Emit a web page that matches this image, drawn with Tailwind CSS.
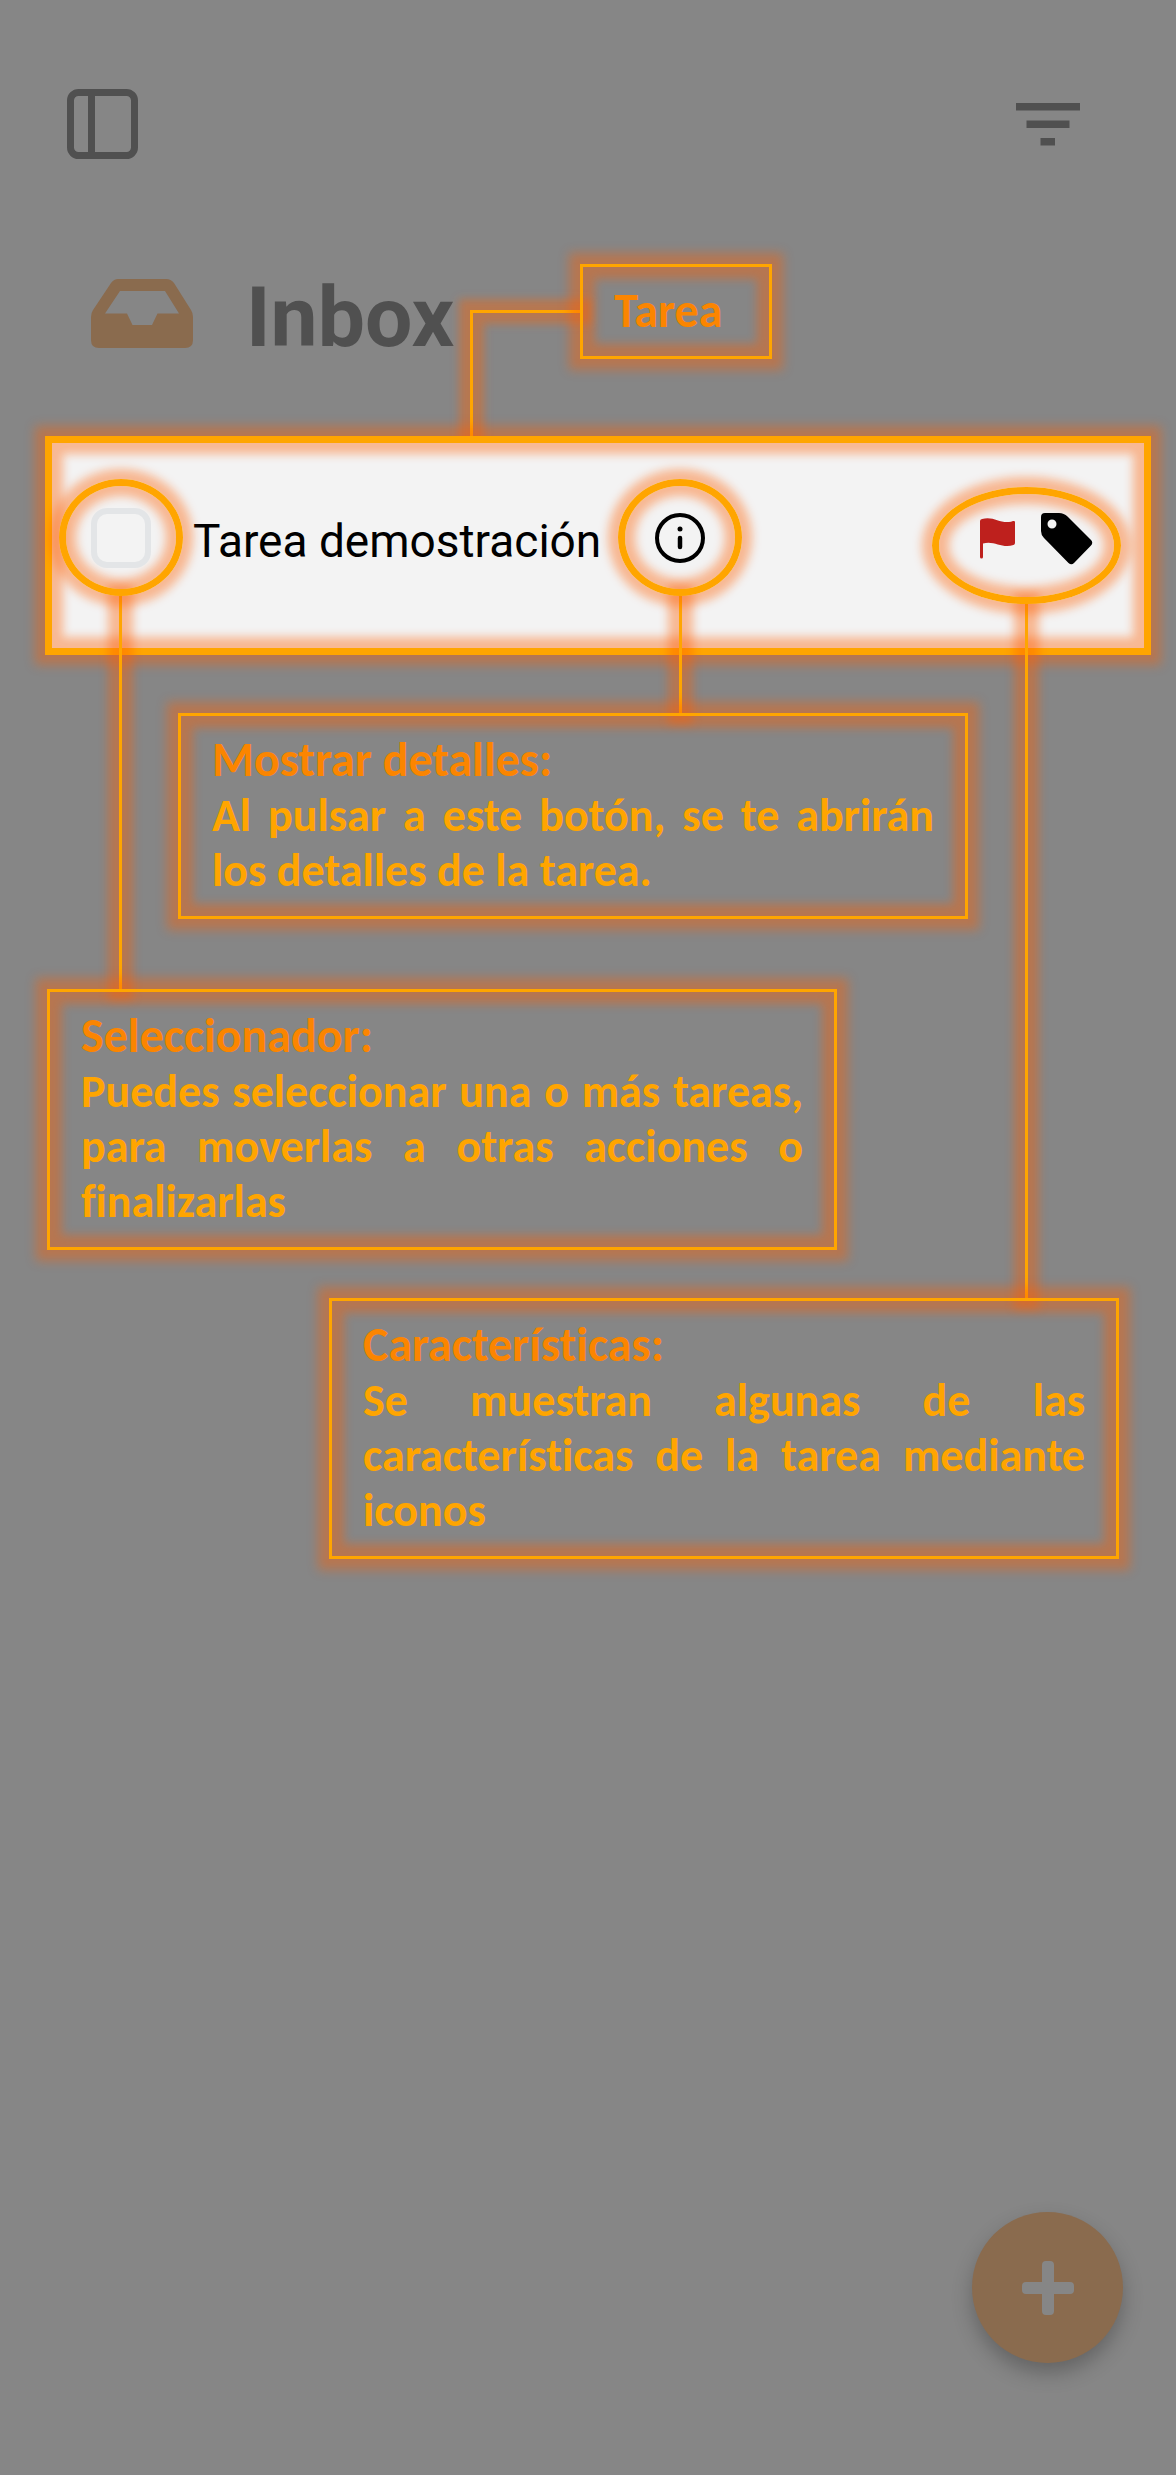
<!DOCTYPE html>
<html lang="es">
<head>
<meta charset="utf-8">
<meta name="viewport" content="width=device-width, initial-scale=1">
<title>Inbox</title>
<script src="https://cdn.jsdelivr.net/npm/@tailwindcss/browser@4"></script>
</head>
<body class="flex min-h-screen flex-col overflow-x-hidden bg-[#868686] font-[Carlito,Lato,sans-serif] [font-variant-ligatures:none]">

  <header class="flex items-center justify-between pt-[89px] pr-24 pl-[67px] text-[#505050]">
    <button type="button" aria-label="Panel lateral" class="block h-[70px] w-[71px]">
      <svg viewBox="0 0 71 70" class="size-full" fill="none" stroke="currentColor" stroke-width="7">
        <rect x="3.5" y="3.5" width="64" height="63" rx="8"/>
        <path d="M24.500 3.500V66.500"/>
      </svg>
    </button>
    <button type="button" aria-label="Filtrar" class="block h-[43px] w-16">
      <svg viewBox="0 0 64 43" class="size-full" fill="currentColor">
        <path d="M0 0H64V7.500H0ZM10.500 17.500H53.500V25H10.500ZM24.500 35H39V42.500H24.500Z"/>
      </svg>
    </button>
  </header>

  <main class="flex flex-col">
    <div class="mt-[105px] flex h-[95px] items-center pl-[91px]">
      <svg viewBox="0 0 102 69" class="mt-1 h-[69px] w-[102px] shrink-0 text-[#8a6b4e]" fill="currentColor" fill-rule="evenodd" aria-hidden="true">
        <path d="M27 0H75Q80 0 83 4L100 31Q102 34 102 38V61Q102 69 94 69H8Q0 69 0 61V38Q0 34 2 31L20 4Q23 0 27 0ZM29 12L14 34.500H36L41.500 46H61L66.500 34.500H88L74 12Z"/>
      </svg>
      <h1 class="ml-[53px] pt-3 font-[Roboto,sans-serif] text-[84px] leading-[88px] font-bold text-[#505050]">Inbox</h1>
      <div class="relative ml-[126px] shrink-0">
        <svg viewBox="0 0 110 126" class="absolute top-[46px] right-full h-[126px] w-[110px] overflow-visible" fill="none" aria-hidden="true">
          <defs>
            <filter id="glow" filterUnits="userSpaceOnUse" x="-50" y="-50" width="220" height="240"><feGaussianBlur stdDeviation="4"/></filter>
          </defs>
          <path d="M121 1.500H1.500V137" stroke="#ff6000" stroke-opacity="0.4" stroke-width="25" filter="url(#glow)"/>
          <path d="M110 1.500H1.500V126" stroke="#ffa500" stroke-width="3"/>
        </svg>
        <p class="relative w-48 border-3 border-[#ffa500] px-[31px] pt-4 pb-[18px] text-[48px] leading-[55px] font-bold text-[#fb8500] shadow-[0_0_10px_11px_#ff600066,inset_0_0_10px_12px_#ff600066]">Tarea</p>
      </div>
    </div>

    <section class="relative mt-[77px] mr-[25px] ml-[45px] flex h-[219px] items-start border-7 border-[#ffa500] bg-[#f3f3f3] pt-9 pr-[23px] pl-[7px] shadow-[0_0_10px_10px_#ff600066,inset_0_0_10px_11px_#ff600066]">
      <div class="relative h-[117px] w-31 shrink-0">
        <span class="absolute top-full left-[60px] h-[393px] w-[3px] bg-[#ffa500] shadow-[0_0_10px_11px_#ff600066]"></span>
        <span class="absolute inset-0 rounded-[50%] border-7 border-[#ffa500] shadow-[0_0_10px_10px_#ff600066,inset_0_0_10px_10px_#ff600066]"></span>
        <div class="relative flex size-full items-center justify-center">
          <input id="tarea" type="checkbox" class="size-[60px] appearance-none rounded-2xl border-6 border-[#e3e5e7] bg-[#f3f3f3]">
        </div>
      </div>
      <label for="tarea" class="ml-[10px] pt-8 font-[Roboto,sans-serif] text-[46px] leading-[60px] whitespace-nowrap text-black">Tarea demostración</label>
      <div class="relative ml-[17px] h-[117px] w-31 shrink-0">
        <span class="absolute top-full left-[61px] h-[117px] w-[3px] bg-[#ffa500] shadow-[0_0_10px_11px_#ff600066]"></span>
        <span class="absolute inset-0 rounded-[50%] border-7 border-[#ffa500] shadow-[0_0_10px_10px_#ff600066,inset_0_0_10px_10px_#ff600066]"></span>
        <button type="button" aria-label="Mostrar detalles" class="relative flex size-full items-center justify-center text-black">
          <svg viewBox="0 0 50 50" class="size-[50px]" fill="none" stroke="currentColor">
            <circle cx="25" cy="25" r="23" stroke-width="4"/>
            <path d="M25 25V34" stroke-width="4.500" stroke-linecap="round"/>
            <circle cx="25" cy="16" r="2.500" fill="currentColor" stroke="none"/>
          </svg>
        </button>
      </div>
      <div class="relative mt-2 ml-auto h-[117px] w-[189px] shrink-0">
        <span class="absolute top-full left-[93px] h-[694px] w-[3px] bg-[#ffa500] shadow-[0_0_10px_11px_#ff600066]"></span>
        <span class="absolute inset-0 rounded-[50%] border-7 border-[#ffa500] shadow-[0_0_10px_10px_#ff600066,inset_0_0_10px_10px_#ff600066]"></span>
        <div class="relative flex size-full items-start gap-[26px] pt-[26px] pl-12">
          <svg viewBox="0 0 35 41" class="mt-[5px] h-[41px] w-[35px]" fill="#be201d" role="img" aria-label="Prioridad">
            <path d="M0 3Q0 1.500 2 1C13 -2 19 5 29 4Q31 4 33 3Q35 2.500 35 4V25Q35 26.500 33.500 27C22 31 14 22 3 25.500V39Q3 40.500 1.500 40.500Q0 40.500 0 39Z"/>
          </svg>
          <svg viewBox="0 0 52 52" class="size-[52px]" fill="#000" fill-rule="evenodd" role="img" aria-label="Etiqueta">
            <path d="M4 0H18Q23 0 26.500 3.500L50 27Q52.500 29.500 50 32.500L33 50Q30.500 52.500 27.500 50L3 25Q0 22 0 18V4Q0 0 4 0ZM11 6.500A4.500 4.500 0 1 0 11 15.500A4.500 4.500 0 1 0 11 6.500Z"/>
          </svg>
        </div>
      </div>
    </section>

    <section class="relative mt-[58px] ml-[178px] max-w-[790px] border-3 border-[#ffa500] px-[31px] pt-[15px] pb-[18px] text-[46px] leading-[55px] font-bold text-[#ffa500] shadow-[0_0_10px_11px_#ff600066,inset_0_0_10px_12px_#ff600066]">
      <h2 class="text-[48px] leading-[57px] text-[#fb8500]">Mostrar detalles:</h2>
      <p class="text-justify">Al pulsar a este botón, se te abrirán los detalles de la tarea.</p>
    </section>

    <section class="relative mt-[70px] ml-[47px] max-w-[790px] border-3 border-[#ffa500] px-[31px] pt-[15px] pb-[18px] text-[46px] leading-[55px] font-bold text-[#ffa500] shadow-[0_0_10px_11px_#ff600066,inset_0_0_10px_12px_#ff600066]">
      <h2 class="text-[48px] leading-[57px] text-[#fb8500]">Seleccionador:</h2>
      <p class="text-justify">Puedes seleccionar una o más tareas, para moverlas a otras acciones o finalizarlas</p>
    </section>

    <section class="relative mt-12 mr-[57px] ml-auto max-w-[790px] border-3 border-[#ffa500] px-[31px] pt-[15px] pb-[18px] text-[46px] leading-[55px] font-bold text-[#ffa500] shadow-[0_0_10px_11px_#ff600066,inset_0_0_10px_12px_#ff600066]">
      <h2 class="text-[48px] leading-[57px] text-[#fb8500]">Características:</h2>
      <p class="text-justify">Se muestran algunas de las características de la tarea mediante iconos</p>
    </section>
  </main>

  <button type="button" aria-label="Añadir tarea" class="mt-auto mr-[53px] mb-28 flex size-[151px] items-center justify-center self-end rounded-full bg-[#8a6b4e] shadow-[0_10px_20px_#00000040]">
    <svg viewBox="0 0 54 54" class="size-[54px]" fill="#868686" aria-hidden="true">
      <rect x="21" y="0" width="12" height="54" rx="4"/>
      <rect x="1" y="21" width="52" height="12" rx="4"/>
    </svg>
  </button>
</body>
</html>
